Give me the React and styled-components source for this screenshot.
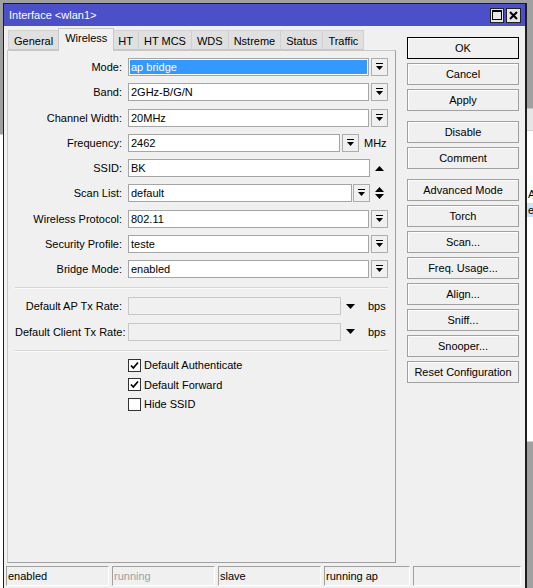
import React from "react";
import styled, { createGlobalStyle } from "styled-components";

const Global = createGlobalStyle`
  html, body { margin: 0; padding: 0; }
  body {
    background: #a0a0a0;
    font-family: "Liberation Sans", Arial, sans-serif;
    font-size: 11px;
    color: #000;
  }
`;

const Desktop = styled.div`
  position: relative;
  width: 533px;
  height: 588px;
  overflow: hidden;
  padding: 3px 0 0 3px;
  box-sizing: border-box;
  background: #a0a0a0;
`;

const Backdrop = styled.div`
  position: absolute;
  top: ${(p) => p.$top}px;
  left: ${(p) => p.$left}px;
  width: ${(p) => p.$width}px;
  height: ${(p) => p.$height}px;
  background: #fff;
  border-top: 1px solid #d0d0d0;
  border-bottom: 1px solid #d0d0d0;
  display: flex;
  flex-direction: column;
  font-size: 11px;
`;

const BackdropHeader = styled.div`
  position: absolute;
  top: ${(p) => p.$top}px;
  left: ${(p) => p.$left}px;
  width: ${(p) => p.$width}px;
  height: ${(p) => p.$height}px;
  background: #e6e6e6;
  border-top: 1px solid #c8c8c8;
`;

const BackdropRow = styled.div`
  height: 14px;
  line-height: 14px;
  padding-left: 1px;
  margin-top: ${(p) => p.$mt || 0}px;
  background: ${(p) => (p.$sel ? "#cce4f7" : "transparent")};
`;

const Window = styled.div`
  position: relative;
  width: 524px;
  height: 600px;
  box-sizing: border-box;
  border: 1px solid #1e1e1e;
  border-right-width: 2px;
  background: #f0f0f0;
  display: flex;
  flex-direction: column;
`;

const TitleBar = styled.div`
  height: 22px;
  background: #4b50c9;
  display: flex;
  align-items: center;
  padding: 0 4px 0 5px;
  color: #fff;
  font-size: 11px;
`;

const Title = styled.div`
  flex: 1;
`;

const TitleButtons = styled.div`
  display: flex;
  gap: 2px;
`;

const TitleBtn = styled.div`
  width: ${(p) => p.$w}px;
  height: 15px;
  box-sizing: border-box;
  border: 1px solid #222;
  background: #e6e6e6;
  display: flex;
  align-items: center;
  justify-content: center;
`;

const Body = styled.div`
  flex: 1;
  display: flex;
  flex-direction: column;
`;

const Main = styled.div`
  display: flex;
  gap: 11px;
  padding-left: 3px;
`;

const LeftCol = styled.div`
  width: 389px;
  padding-top: 2px;
  display: flex;
  flex-direction: column;
`;

const TabRow = styled.div`
  height: 22px;
  display: flex;
  align-items: flex-end;
  padding-left: 1px;
  position: relative;
  z-index: 1;
`;

const Tab = styled.div`
  height: ${(p) => (p.$active ? 23 : 20)}px;
  box-sizing: border-box;
  padding: ${(p) => (p.$active ? "3px 6px 0" : "4px 5px 0")};
  margin: ${(p) => (p.$active ? "0 -1px -1px -1px" : "0")};
  background: ${(p) => (p.$active ? "#f0f0f0" : "#e0e0e0")};
  border: 1px solid ${(p) => (p.$active ? "#c8c8c8" : "#d0d0d0")};
  border-bottom: ${(p) => (p.$active ? "none" : "1px solid #c8c8c8")};
  border-left: ${(p) => (p.$active ? "1px solid #c8c8c8" : "none")};
  position: relative;
  z-index: ${(p) => (p.$active ? 2 : 1)};
  white-space: nowrap;
  &:first-child {
    border-left: 1px solid #d0d0d0;
  }
`;

const Panel = styled.div`
  height: 513px;
  box-sizing: border-box;
  border: 1px solid #c8c8c8;
  border-right-color: #a0a0a0;
  border-bottom-color: #a0a0a0;
  padding: 3.5px 7px 0 7px;
  display: flex;
  flex-direction: column;
`;

const Row = styled.div`
  height: ${(p) => p.$h || 25.25}px;
  flex-shrink: 0;
  display: flex;
  align-items: center;
`;

const Label = styled.div`
  width: 107px;
  margin-right: 6px;
  text-align: right;
  white-space: nowrap;
`;

const Field = styled.div`
  flex: 1;
  display: flex;
  align-items: center;
  height: 18px;
`;

const Input = styled.div`
  flex: 1;
  height: 18px;
  box-sizing: border-box;
  border: 1px solid ${(p) => (p.$disabled ? "#c8c8c8" : "#a5a5a5")};
  background: ${(p) => (p.$disabled ? "#f0f0f0" : "#fff")};
  padding: 1px;
  display: flex;
  align-items: stretch;
`;

const Value = styled.div`
  flex: 1;
  padding-left: 1px;
  display: flex;
  align-items: center;
  background: ${(p) => (p.$selected ? "#3399ff" : "transparent")};
  color: ${(p) => (p.$selected ? "#fff" : "#000")};
  white-space: nowrap;
`;

const DropBtn = styled.div`
  width: 17px;
  height: 18px;
  box-sizing: border-box;
  margin-left: ${(p) => (p.$ml !== undefined ? p.$ml : 2)}px;
  border: 1px solid #adadad;
  background: #f0f0f0;
  display: flex;
  align-items: center;
  justify-content: center;
`;

const ArrowBox = styled.div`
  width: ${(p) => p.$w || 18}px;
  height: 18px;
  display: flex;
  align-items: center;
  justify-content: center;
`;

const Unit = styled.div`
  width: ${(p) => p.$w}px;
  box-sizing: border-box;
  padding-left: ${(p) => p.$pl}px;
  white-space: nowrap;
`;

const Separator = styled.div`
  flex-shrink: 0;
  margin-top: ${(p) => p.$mt}px;
  margin-bottom: ${(p) => p.$mb}px;
  height: 0;
  border-top: 1px solid #d5d5d5;
  border-bottom: 1px solid #fbfbfb;
`;

const CheckRow = styled.label`
  height: 19.5px;
  flex-shrink: 0;
  display: flex;
  align-items: center;
  padding-left: 113px;
`;

const Box = styled.span`
  width: 13px;
  height: 13px;
  box-sizing: border-box;
  border: 1px solid #333;
  background: #fff;
  margin-right: 3px;
  display: flex;
  align-items: center;
  justify-content: center;
`;

const RightCol = styled.div`
  width: 112px;
  padding-top: 11px;
  display: flex;
  flex-direction: column;
  gap: 10px;
`;

const BtnGroup = styled.div`
  display: flex;
  flex-direction: column;
  gap: 4px;
`;

const Button = styled.div`
  height: 22px;
  box-sizing: border-box;
  border: 1px solid ${(p) => (p.$default ? "#000" : "#a0a0a0")};
  background: #f0f0f0;
  box-shadow: inset 1px 1px 0 #fdfdfd;
  display: flex;
  align-items: center;
  justify-content: center;
  white-space: nowrap;
`;

const StatusBar = styled.div`
  margin-top: 3px;
  padding-left: 2px;
  display: flex;
  gap: 3px;
`;

const Cell = styled.div`
  width: ${(p) => p.$w}px;
  height: 20px;
  box-sizing: border-box;
  border: 1px solid #a0a0a0;
  border-right-color: #fff;
  border-bottom-color: #fff;
  padding-left: 1px;
  display: flex;
  align-items: center;
  color: ${(p) => (p.$dim ? "#a0a0a0" : "#000")};
  white-space: nowrap;
`;

const DropIcon = () => (
  <svg width="7" height="8" viewBox="0 0 7 8">
    <rect x="0" y="0" width="7" height="1" fill="#000" />
    <polygon points="0,3 7,3 3.5,7" fill="#000" />
  </svg>
);

const UpIcon = () => (
  <svg width="9" height="5" viewBox="0 0 9 5">
    <polygon points="0,5 9,5 4.5,0" fill="#000" />
  </svg>
);

const DownIcon = () => (
  <svg width="9" height="5" viewBox="0 0 9 5">
    <polygon points="0,0 9,0 4.5,5" fill="#000" />
  </svg>
);

const UpDownIcon = () => (
  <svg width="9" height="12" viewBox="0 0 9 12">
    <polygon points="0,5 9,5 4.5,0" fill="#000" />
    <polygon points="0,7 9,7 4.5,12" fill="#000" />
  </svg>
);

const CheckIcon = () => (
  <svg width="9" height="9" viewBox="0 0 9 9">
    <path d="M1 4.5 L3.3 7 L8 1.5" stroke="#000" strokeWidth="1.8" fill="none" />
  </svg>
);

const MaxIcon = () => (
  <svg width="10" height="10" viewBox="0 0 10 10">
    <rect x="0.5" y="0.5" width="9" height="9" fill="none" stroke="#000" strokeWidth="1" />
    <rect x="0" y="0" width="10" height="2" fill="#000" />
  </svg>
);

const CloseIcon = () => (
  <svg width="9" height="9" viewBox="0 0 9 9">
    <path d="M1 1 L8 8 M8 1 L1 8" stroke="#000" strokeWidth="2" />
  </svg>
);

const tabs = ["General", "Wireless", "HT", "HT MCS", "WDS", "Nstreme", "Status", "Traffic"];

const selectRows = [
  { label: "Mode:", value: "ap bridge", selected: true },
  { label: "Band:", value: "2GHz-B/G/N" },
  { label: "Channel Width:", value: "20MHz" },
];

const lowerRows = [
  { label: "Wireless Protocol:", value: "802.11" },
  { label: "Security Profile:", value: "teste" },
  { label: "Bridge Mode:", value: "enabled" },
];

const buttonGroups = [
  [{ t: "OK", d: true }, { t: "Cancel" }, { t: "Apply" }],
  [{ t: "Disable" }, { t: "Comment" }],
  [
    { t: "Advanced Mode" },
    { t: "Torch" },
    { t: "Scan..." },
    { t: "Freq. Usage..." },
    { t: "Align..." },
    { t: "Sniff..." },
    { t: "Snooper..." },
    { t: "Reset Configuration" },
  ],
];

const SelectRow = ({ label, value, selected }) => (
  <Row>
    <Label>{label}</Label>
    <Field>
      <Input>
        <Value $selected={selected}>{value}</Value>
      </Input>
      <DropBtn>
        <DropIcon />
      </DropBtn>
    </Field>
  </Row>
);

export default function App() {
  return (
    <>
      <Global />
      <Desktop>
        <Backdrop $top={134} $left={0} $width={3} $height={454} />
        <BackdropHeader $top={108} $left={527} $width={10} $height={22} />
        <Backdrop $top={130} $left={527} $width={10} $height={310}>
          <BackdropRow $mt={56}>A</BackdropRow>
          <BackdropRow $sel $mt={2}>e</BackdropRow>
        </Backdrop>
        <Window>
          <TitleBar>
            <Title>Interface &lt;wlan1&gt;</Title>
            <TitleButtons>
              <TitleBtn $w={14}>
                <MaxIcon />
              </TitleBtn>
              <TitleBtn $w={15}>
                <CloseIcon />
              </TitleBtn>
            </TitleButtons>
          </TitleBar>
          <Body>
            <Main>
              <LeftCol>
                <TabRow>
                  {tabs.map((t) => (
                    <Tab key={t} $active={t === "Wireless"}>
                      {t}
                    </Tab>
                  ))}
                </TabRow>
                <Panel>
                  {selectRows.map((r) => (
                    <SelectRow key={r.label} {...r} />
                  ))}
                  <Row>
                    <Label>Frequency:</Label>
                    <Field>
                      <Input>
                        <Value>2462</Value>
                      </Input>
                      <DropBtn>
                        <DropIcon />
                      </DropBtn>
                      <Unit $w={29} $pl={5}>MHz</Unit>
                    </Field>
                  </Row>
                  <Row>
                    <Label>SSID:</Label>
                    <Field>
                      <Input>
                        <Value>BK</Value>
                      </Input>
                      <ArrowBox>
                        <UpIcon />
                      </ArrowBox>
                    </Field>
                  </Row>
                  <Row>
                    <Label>Scan List:</Label>
                    <Field>
                      <Input>
                        <Value>default</Value>
                      </Input>
                      <DropBtn $ml={1}>
                        <DropIcon />
                      </DropBtn>
                      <ArrowBox>
                        <UpDownIcon />
                      </ArrowBox>
                    </Field>
                  </Row>
                  {lowerRows.map((r) => (
                    <SelectRow key={r.label} {...r} />
                  ))}
                  <Separator $mt={5} $mb={4.5} />
                  {["Default AP Tx Rate:", "Default Client Tx Rate:"].map((l) => (
                    <Row key={l} $h={25.5}>
                      <Label>{l}</Label>
                      <Field>
                        <Input $disabled>
                          <Value />
                        </Input>
                        <ArrowBox $w={19}>
                          <DownIcon />
                        </ArrowBox>
                        <Unit $w={28} $pl={8}>bps</Unit>
                      </Field>
                    </Row>
                  ))}
                  <Separator $mt={5.5} $mb={3.5} />
                  <CheckRow>
                    <Box>
                      <CheckIcon />
                    </Box>
                    Default Authenticate
                  </CheckRow>
                  <CheckRow>
                    <Box>
                      <CheckIcon />
                    </Box>
                    Default Forward
                  </CheckRow>
                  <CheckRow>
                    <Box />
                    Hide SSID
                  </CheckRow>
                </Panel>
              </LeftCol>
              <RightCol>
                {buttonGroups.map((g, i) => (
                  <BtnGroup key={i}>
                    {g.map((b) => (
                      <Button key={b.t} $default={b.d}>
                        {b.t}
                      </Button>
                    ))}
                  </BtnGroup>
                ))}
              </RightCol>
            </Main>
            <StatusBar>
              <Cell $w={103}>enabled</Cell>
              <Cell $w={103} $dim>running</Cell>
              <Cell $w={103}>slave</Cell>
              <Cell $w={86}>running ap</Cell>
              <Cell $w={108} />
            </StatusBar>
          </Body>
        </Window>
      </Desktop>
    </>
  );
}
